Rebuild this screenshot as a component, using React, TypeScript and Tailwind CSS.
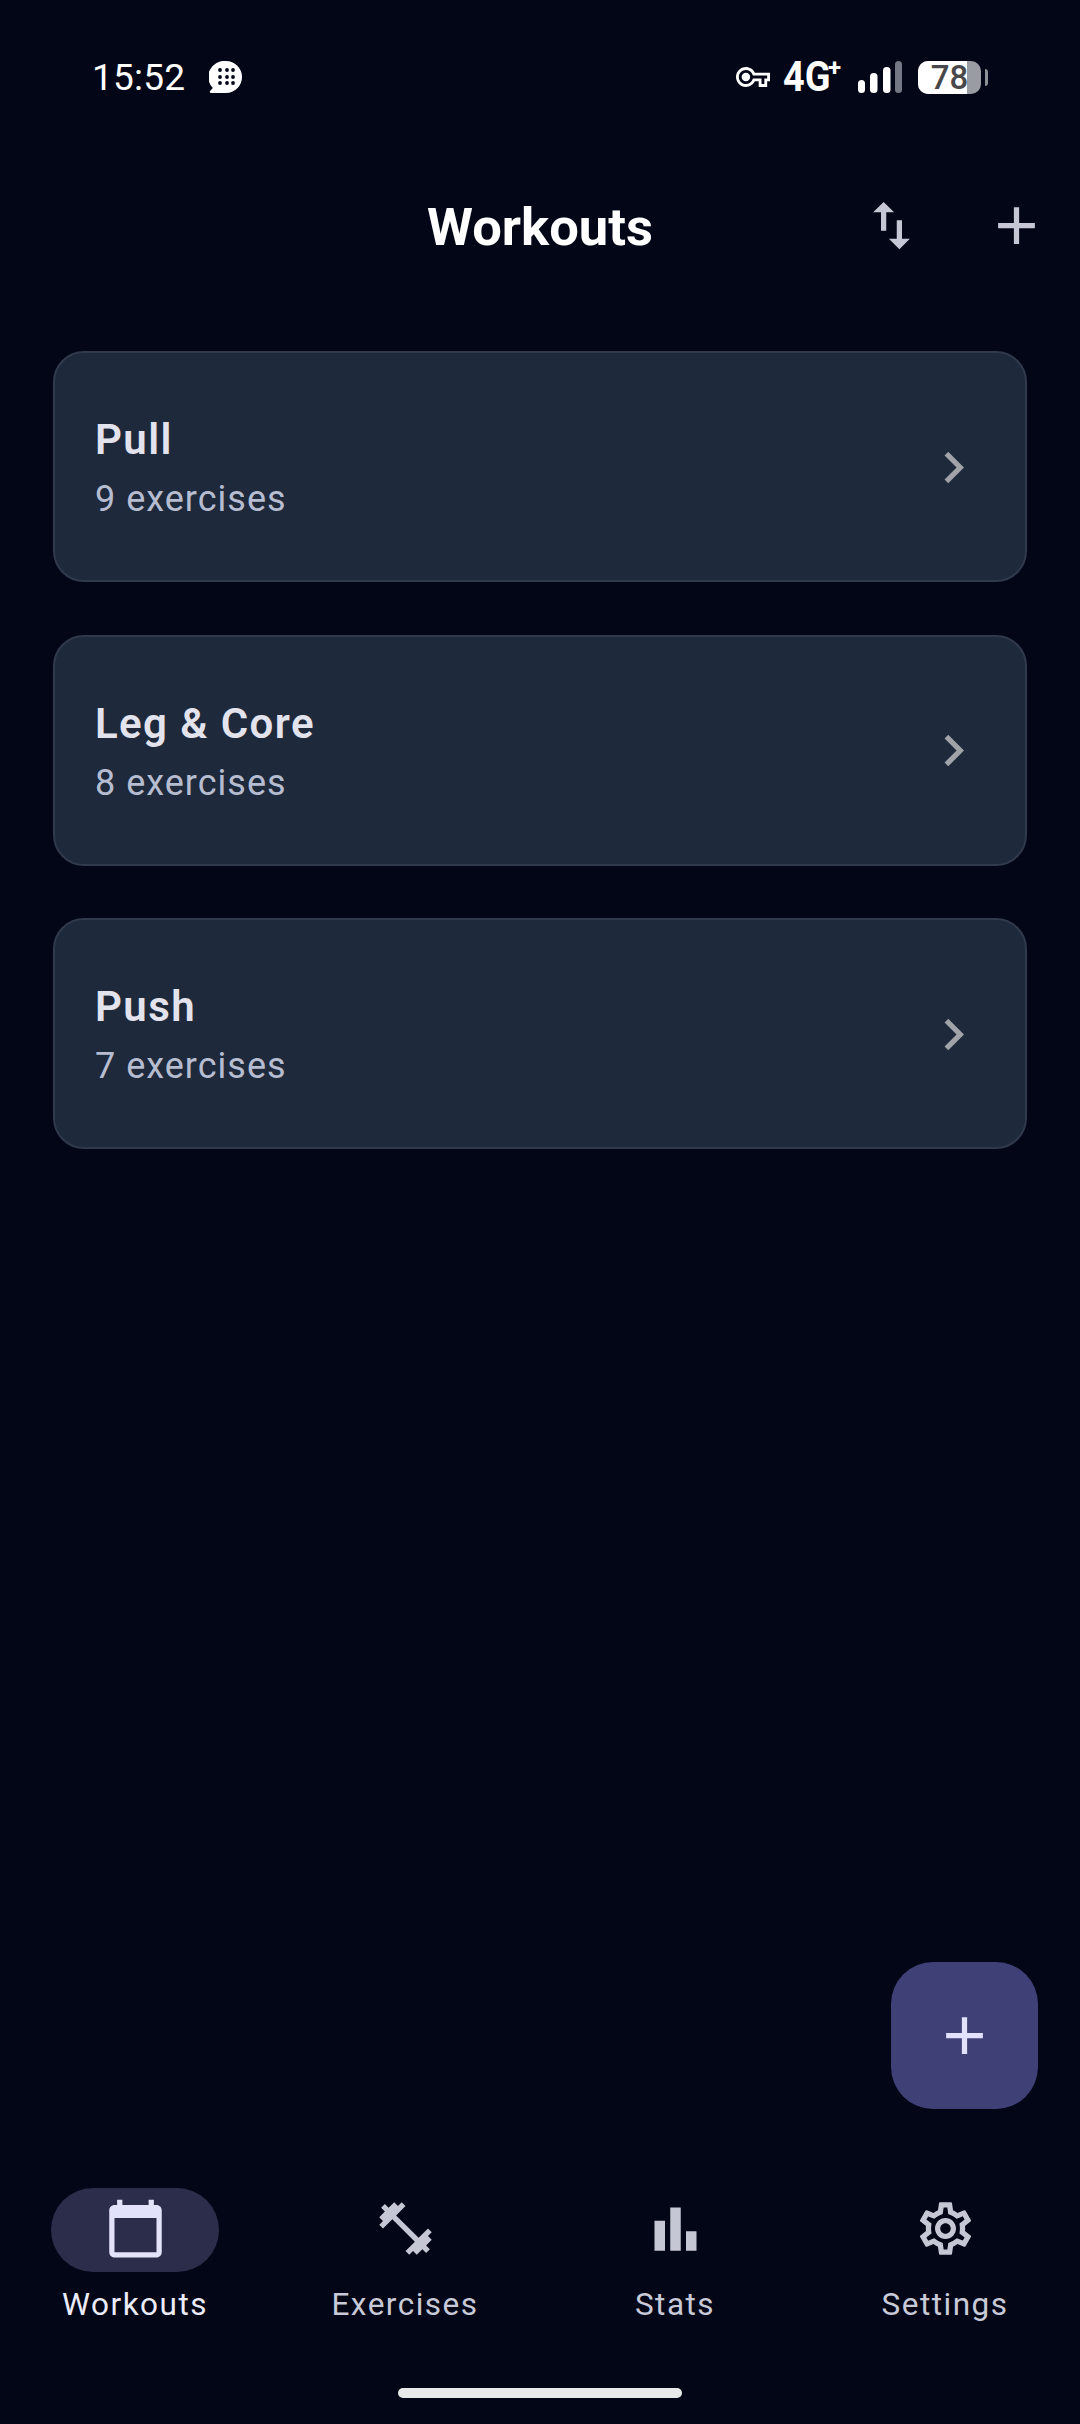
import { ReactNode } from "react";

const font = { fontFamily: "Roboto, sans-serif" };

const PATHS = {
  swap: "M16 17.01V10h-2v7.01h-3L15 21l4-3.99h-3zM9 3L5 6.99h3V14h2V6.99h3L9 3z",
  add: "M19 13h-6v6h-2v-6H5v-2h6V5h2v6h6v2z",
  chevron: "M10 6L8.59 7.41 13.17 12l-4.58 4.59L10 18l6-6z",
  calendar:
    "M20 3h-1V1h-2v2H7V1H5v2H4c-1.1 0-2 .9-2 2v16c0 1.1.9 2 2 2h16c1.1 0 2-.9 2-2V5c0-1.1-.9-2-2-2zm0 18H4V8h16v13z",
  dumbbell:
    "M20.57 14.86L22 13.43 20.57 12 17 15.57 8.43 7 12 3.43 10.57 2 9.14 3.43 7.71 2 5.57 4.14 4.14 2.71 2.71 4.14l1.43 1.43L2 7.71l1.43 1.43L2 10.57 3.43 12 7 8.43 15.57 17 12 20.57 13.43 22l1.43-1.43L16.29 22l2.14-2.14 1.43 1.43 1.43-1.43-1.43-1.43L22 16.29z",
  bars: "M4 9h4v11.5H4zM10 4h4v16.5h-4zM16 13h4v7.5h-4z",
  gear: "M19.43 12.98c.04-.32.07-.64.07-.98 0-.34-.03-.66-.07-.98l2.11-1.65c.19-.15.24-.42.12-.64l-2-3.46c-.09-.16-.26-.25-.44-.25-.06 0-.12.01-.17.03l-2.49 1c-.52-.4-1.08-.73-1.69-.98l-.38-2.65C14.46 2.18 14.25 2 14 2h-4c-.25 0-.46.18-.49.42l-.38 2.65c-.61.25-1.17.59-1.69.98l-2.49-1c-.06-.02-.12-.03-.18-.03-.17 0-.34.09-.43.25l-2 3.46c-.13.22-.07.49.12.64l2.11 1.65c-.04.32-.07.65-.07.98 0 .33.03.66.07.98l-2.11 1.65c-.19.15-.24.42-.12.64l2 3.46c.09.16.26.25.44.25.06 0 .12-.01.17-.03l2.49-1c.52.4 1.08.73 1.69.98l.38 2.65c.03.24.24.42.49.42h4c.25 0 .46-.18.49-.42l.38-2.65c.61-.25 1.17-.59 1.69-.98l2.49 1c.06.02.12.03.18.03.17 0 .34-.09.43-.25l2-3.46c.12-.22.07-.49-.12-.64l-2.11-1.65zm-1.98-1.71c.04.31.05.52.05.73 0 .21-.02.43-.05.73l-.14 1.13.89.7 1.08.84-.7 1.21-1.27-.51-1.04-.42-.9.68c-.43.32-.84.56-1.25.73l-1.06.43-.16 1.13-.2 1.35h-1.4l-.19-1.35-.16-1.13-1.06-.43c-.43-.18-.83-.41-1.23-.71l-.91-.7-1.06.43-1.27.51-.7-1.21 1.08-.84.89-.7-.14-1.13c-.03-.31-.05-.54-.05-.74s.02-.43.05-.73l.14-1.13-.89-.7-1.08-.84.7-1.21 1.27.51 1.04.42.9-.68c.43-.32.84-.56 1.25-.73l1.06-.43.16-1.13.2-1.35h1.39l.19 1.35.16 1.13 1.06.43c.43.18.83.41 1.23.71l.91.7 1.06-.43 1.27-.51.7 1.21-1.07.85-.89.7.14 1.13zM12 8c-2.21 0-4 1.79-4 4s1.79 4 4 4 4-1.79 4-4-1.79-4-4-4zm0 6c-1.1 0-2-.9-2-2s.9-2 2-2 2 .9 2 2-.9 2-2 2z",
  key: "M22 19h-6v-4h-2.68c-1.14 2.42-3.6 4-6.32 4-3.86 0-7-3.14-7-7s3.14-7 7-7c2.72 0 5.17 1.58 6.32 4H24v6h-2v4zm-4-2h2v-4h2v-2H11.94l-.23-.67C11.01 8.34 9.11 7 7 7c-2.76 0-5 2.24-5 5s2.24 5 5 5c2.11 0 4.01-1.34 4.71-3.33l.23-.67H18v4zM7 15c-1.65 0-3-1.35-3-3s1.35-3 3-3 3 1.35 3 3-1.35 3-3 3z",
};

function Icon({ d, className }: { d: string; className?: string }) {
  return (
    <svg viewBox="0 0 24 24" fill="currentColor" className={`w-[63px] h-[63px] shrink-0 ${className ?? ""}`}>
      <path d={d} />
    </svg>
  );
}

function StatusBar() {
  return (
    <div className="h-[154px] shrink-0 flex items-center justify-between pl-[92px] pr-[92px] text-white">
      <div className="flex items-center gap-[24px]">
        <span className="text-[37px] leading-none tracking-[0.2px]">15:52</span>
        {/* chat bubble with the dot grid */}
        <svg viewBox="0 0 34 33" className="w-[34px] h-[33px]">
          <path d="M17 0a16 16 0 1 1 0 32H2a1.2 1.2 0 0 1-.9-2l2.7-2.9A16 16 0 0 1 17 0z" fill="#fff" />
          {[9, 16, 22].map((cy) =>
            [11, 18, 24].map((cx) => <circle key={`${cx}-${cy}`} cx={cx} cy={cy} r="1.9" fill="#020617" />)
          )}
        </svg>
      </div>
      <div className="flex items-center">
        <svg viewBox="0 5 24 14" fill="#fff" className="w-[34px] h-[20px] mr-[13px]">
          <path d={PATHS.key} />
        </svg>
        <span className="text-[42px] leading-none font-bold scale-x-[0.9] origin-left w-[45px]">4G</span>
        <span className="text-[24px] leading-none font-bold -mt-[19px] w-[14px]">+</span>
        <svg viewBox="0 0 46 33" className="w-[46px] h-[33px] ml-[15px]">
          <rect x="1" y="19" width="7" height="13" rx="3.5" fill="#fff" />
          <rect x="13" y="12" width="7.5" height="20" rx="3.5" fill="#fff" />
          <rect x="26" y="6" width="7.5" height="26" rx="3.5" fill="#fff" />
          <rect x="38" y="0" width="7" height="32" rx="3.5" fill="#747784" />
        </svg>
        <div className="ml-[15px] relative w-[63px] h-[33px] rounded-[10px] bg-[#9a9ca3]">
          <div className="absolute inset-y-0 left-0 w-[49px] rounded-l-[10px] bg-white" />
          <span className="absolute inset-0 flex items-center justify-center text-[33px] leading-none font-medium text-[#48484a]">
            78
          </span>
        </div>
        <div className="ml-[4px] w-[3px] h-[17px] rounded-r-[3px] bg-[#8e9098]" />
      </div>
    </div>
  );
}

function Header() {
  return (
    <header className="h-[142px] shrink-0 relative flex items-center justify-center">
      <h1 className="text-[52.5px] leading-none font-bold text-white mt-[4px]">Workouts</h1>
      <div className="absolute right-[32px] top-[40px] flex gap-[62px] text-[#c6c7d4]">
        <Icon d={PATHS.swap} />
        <Icon d={PATHS.add} />
      </div>
    </header>
  );
}

function WorkoutCard({ name, count }: { name: string; count: number }) {
  return (
    <div className="h-[231px] flex items-center justify-between rounded-[31px] border-[2px] border-[#303a4c] bg-[#1e293b] pl-[40px] pr-[40px]">
      <div className="flex flex-col gap-[5px] mt-[2px]">
        <span className="text-[42px] leading-[58px] font-semibold tracking-[1.4px] text-[#e3e3ee]">{name}</span>
        <span className="text-[36px] leading-[50px] tracking-[1px] text-[#b7bdd0]">{count} exercises</span>
      </div>
      <Icon d={PATHS.chevron} className="text-[#a0a4a9] mt-[1px]" />
    </div>
  );
}

function NavItem({ label, active, children }: { label: string; active?: boolean; children: ReactNode }) {
  return (
    <div className="flex flex-col items-center">
      <div
        className={`w-[168px] h-[84px] rounded-full flex items-center justify-center pb-[3px] ${
          active ? "bg-[#2c2d4a] text-[#e2e2fb]" : "text-[#c6c7d4]"
        }`}
      >
        {children}
      </div>
      <span
        className={`mt-[12px] text-[31.5px] leading-[42px] font-[450] tracking-[1.5px] ${
          active ? "text-[#ecebfa]" : "text-[#c8cad8]"
        }`}
      >
        {label}
      </span>
    </div>
  );
}

export default function App() {
  return (
    <div className="relative h-[2424px] w-[1080px] overflow-hidden flex flex-col bg-[#020617]" style={font}>
      <StatusBar />
      <Header />

      <main className="flex-1 flex flex-col gap-[52.5px] px-[53px] pt-[55px]">
        <WorkoutCard name="Pull" count={9} />
        <WorkoutCard name="Leg & Core" count={8} />
        <WorkoutCard name="Push" count={7} />
      </main>

      <button className="absolute left-[891px] top-[1962px] w-[147px] h-[147px] rounded-[42px] bg-[#3f4176] flex items-center justify-center text-[#e2e2ff]">
        <Icon d={PATHS.add} />
      </button>

      <nav className="shrink-0 grid grid-cols-4">
        <NavItem label="Workouts" active>
          <Icon d={PATHS.calendar} />
        </NavItem>
        <NavItem label="Exercises">
          <Icon d={PATHS.dumbbell} />
        </NavItem>
        <NavItem label="Stats">
          <Icon d={PATHS.bars} />
        </NavItem>
        <NavItem label="Settings">
          <Icon d={PATHS.gear} />
        </NavItem>
      </nav>

      <div className="shrink-0 flex justify-center pt-[62px] pb-[26px]">
        <div className="w-[284px] h-[10px] rounded-full bg-[#e8eaea]" />
      </div>
    </div>
  );
}
